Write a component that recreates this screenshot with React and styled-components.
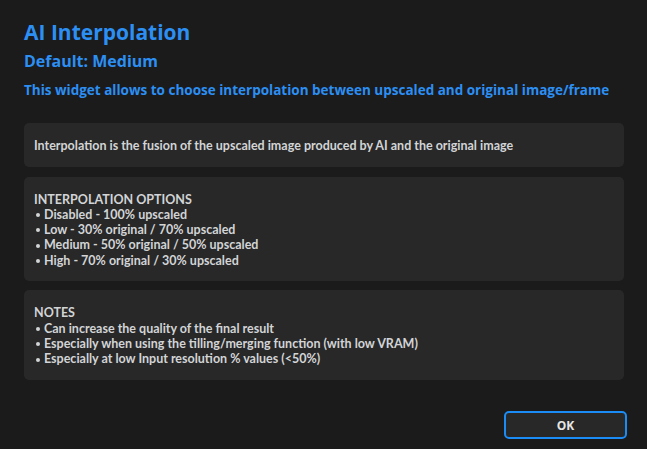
import React from "react";
import styled, { createGlobalStyle } from "styled-components";

const Global = createGlobalStyle`
  html, body { margin: 0; padding: 0; background: #1b1b1b; }
  body { font-family: "Open Sans", "Noto Sans", sans-serif; }
`;

const Page = styled.div`
  width: 647px;
  height: 449px;
  box-sizing: border-box;
  padding: 17px 20px 10px 24px;
  display: flex;
  flex-direction: column;
  background: #1b1b1b;
`;

const Title = styled.h1`
  margin: 0;
  font-size: 21px;
  font-weight: 700;
  line-height: 30px;
  color: #2c8ff3;
`;

const Subtitle = styled.h2`
  margin: 3px 0 0;
  font-size: 16px;
  font-weight: 700;
  line-height: 22px;
  color: #2c8ff3;
`;

const Description = styled.p`
  margin: 9px 0 0;
  font-size: 13.5px;
  font-weight: 700;
  line-height: 18px;
  color: #2c8ff3;
`;

const Cards = styled.div`
  display: flex;
  flex-direction: column;
  gap: 9.5px;
  margin-top: 24px;
  margin-right: 3px;
`;

const Card = styled.div`
  box-sizing: border-box;
  min-height: 44px;
  background: #282828;
  border-radius: 5px;
  padding: 15px 10px 13px;
  color: #d2d4d6;
  font-family: Lato, "Open Sans", sans-serif;
  font-size: 12.5px;
  font-weight: 700;
  line-height: 15.3px;
`;

const Line = styled.div`
  white-space: pre;
`;

const Item = styled.div`
  display: flex;
  white-space: pre;
`;

const Bullet = styled.span`
  width: 10px;
  flex: none;
  box-sizing: border-box;
  padding-left: 2px;
  display: flex;
  align-items: center;
  justify-content: flex-start;
  &::before {
    content: "";
    width: 4px;
    height: 4px;
    border-radius: 50%;
    background: currentColor;
    margin-top: 1px;
  }
`;

const Footer = styled.div`
  margin-top: auto;
  display: flex;
  justify-content: flex-end;
`;

const Button = styled.button`
  width: 123px;
  height: 28px;
  background: #282828;
  border: 2px solid #1b8cf5;
  border-radius: 5px;
  color: #e6e6e6;
  font-family: "Open Sans", sans-serif;
  font-size: 12px;
  font-weight: 700;
  cursor: pointer;
`;

const cards = [
  { heading: "Interpolation is the fusion of the upscaled image produced by AI and the original image", items: [] },
  {
    heading: "INTERPOLATION OPTIONS",
    items: [
      "Disabled - 100% upscaled",
      "Low - 30% original / 70% upscaled",
      "Medium - 50% original / 50% upscaled",
      "High - 70% original / 30% upscaled",
    ],
  },
  {
    heading: "NOTES",
    items: [
      "Can increase the quality of the final result",
      "Especially when using the tilling/merging function (with low VRAM)",
      "Especially at low Input resolution % values (<50%)",
    ],
  },
];

export default function App() {
  return (
    <>
      <Global />
      <Page>
        <Title>AI Interpolation</Title>
        <Subtitle>Default: Medium</Subtitle>
        <Description>
          This widget allows to choose interpolation between upscaled and original image/frame
        </Description>
        <Cards>
          {cards.map((c, i) => (
            <Card key={i}>
              <Line>{c.heading}</Line>
              {c.items.map((t, j) => (
                <Item key={j}>
                  <Bullet />
                  <span>{t}</span>
                </Item>
              ))}
            </Card>
          ))}
        </Cards>
        <Footer>
          <Button>OK</Button>
        </Footer>
      </Page>
    </>
  );
}
